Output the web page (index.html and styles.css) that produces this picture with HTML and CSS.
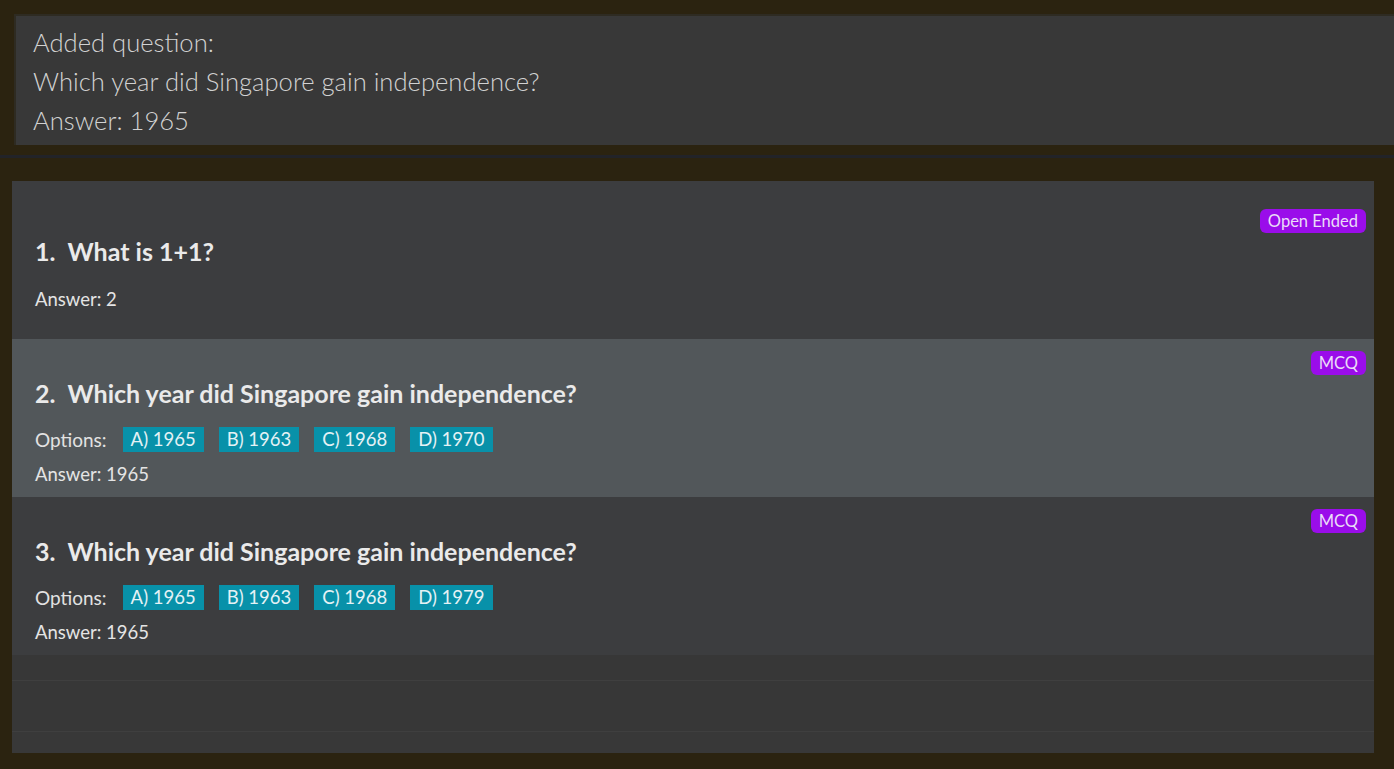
FILE: index.html
```html
<!DOCTYPE html>
<html>
<head>
<meta charset="utf-8">
<link rel="stylesheet" href="styles.css">
</head>
<body>
<div class="page">
  <div class="result">
    <div class="result-line">Added question:</div>
    <div class="result-line">Which year did Singapore gain independence?</div>
    <div class="result-line">Answer: 1965</div>
  </div>
  <div class="splitter"></div>
  <div class="list">
    <div class="card">
      <div class="badge-row"><span class="badge">Open Ended</span></div>
      <div class="title"><span class="num">1.</span>What is 1+1?</div>
      <div class="answer">Answer: 2</div>
    </div>
    <div class="card selected">
      <div class="badge-row"><span class="badge">MCQ</span></div>
      <div class="title"><span class="num">2.</span>Which year did Singapore gain independence?</div>
      <div class="options"><span class="opt-label">Options:</span><span class="chip">A) 1965</span><span class="chip">B) 1963</span><span class="chip">C) 1968</span><span class="chip">D) 1970</span></div>
      <div class="answer">Answer: 1965</div>
    </div>
    <div class="card">
      <div class="badge-row"><span class="badge">MCQ</span></div>
      <div class="title"><span class="num">3.</span>Which year did Singapore gain independence?</div>
      <div class="options"><span class="opt-label">Options:</span><span class="chip">A) 1965</span><span class="chip">B) 1963</span><span class="chip">C) 1968</span><span class="chip">D) 1979</span></div>
      <div class="answer">Answer: 1965</div>
    </div>
    <div class="empty short"></div>
    <div class="empty"></div>
  </div>
</div>
</body>
</html>
```
FILE: styles.css
```css
html, body {
  margin: 0;
  padding: 0;
  background: #2b2310;
  overflow: hidden;
}
body {
  font-family: Lato, "Liberation Sans", sans-serif;
  width: 1394px;
  height: 769px;
}
.page {
  padding-top: 14px;
}
.result {
  margin-left: 14px;
  border-top: 2px solid #2e2b22;
  border-left: 2px solid #2e2b22;
  background: #383838;
  height: 122px;
  padding: 7px 17px 0 17px;
  box-sizing: content-box;
}
.result-line {
  font-size: 25.6px;
  font-weight: 300;
  line-height: 39px;
  color: #d2d2d2;
  white-space: nowrap;
}
.splitter {
  margin-top: 10px;
  height: 3px;
  background: #222328;
}
.list {
  margin: 23px 0 0 12px;
  width: 1362px;
  height: 572px;
  background: #383838;
  display: flex;
  flex-direction: column;
}
.card {
  height: 158px;
  flex: none;
  box-sizing: border-box;
  background: #3c3d3f;
  display: flex;
  flex-direction: column;
  justify-content: center;
  padding: 0 8px 0 23px;
}
.card.selected {
  background: #52575a;
}
.badge-row {
  display: flex;
  justify-content: flex-end;
  height: 24px;
}
.badge {
  height: 24px;
  line-height: 24px;
  padding: 0 8px;
  border-radius: 6px;
  background: #9a0dea;
  color: #eadcf8;
  font-size: 16.5px;
}
.title {
  margin-top: 3px;
  margin-bottom: 11px;
  font-size: 25px;
  font-weight: 700;
  line-height: 30px;
  color: #eaeaea;
  white-space: nowrap;
}
.num {
  display: inline-block;
  margin-right: 12px;
}
.options {
  margin-top: 8px;
  display: flex;
  align-items: center;
  height: 25px;
  gap: 15px;
}
.opt-label {
  font-size: 19px;
  color: #e2e2e2;
  margin-right: 1px;
}
.chip {
  height: 25px;
  line-height: 25px;
  padding: 0 8px;
  background: #0891a9;
  color: #e4f2f5;
  font-size: 18.5px;
}
.answer {
  margin-top: 10px;
  font-size: 18.5px;
  line-height: 24px;
  color: #e4e4e4;
}
.empty {
  height: 50px;
  flex: none;
  border-bottom: 1px solid #3f3f3f;
  background: #373737;
}
.empty.short {
  height: 25px;
}
```
